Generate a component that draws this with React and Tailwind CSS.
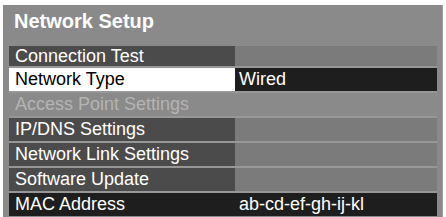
import React from 'react';

const rows = [
  { label: 'Connection Test', value: '', kind: 'normal', h: 'h-[20px]' },
  { label: 'Network Type', value: 'Wired', kind: 'selected', h: 'h-[23px]' },
  { label: 'Access Point Settings', value: '', kind: 'disabled', h: 'h-[23px]' },
  { label: 'IP/DNS Settings', value: '', kind: 'normal', h: 'h-[23px]' },
  { label: 'Network Link Settings', value: '', kind: 'normal', h: 'h-[23px]' },
  { label: 'Software Update', value: '', kind: 'normal', h: 'h-[23px]' },
  { label: 'MAC Address', value: 'ab-cd-ef-gh-ij-kl', kind: 'info', h: 'h-[23px]' },
];

function Row({ row }) {
  let left = 'bg-[#4b4b4b] text-white';
  let right = 'bg-[#7b7b7b] text-white';
  if (row.kind === 'selected') {
    left = 'bg-white text-black';
    right = 'bg-[#1e1e1e] text-white';
  } else if (row.kind === 'disabled') {
    left = 'bg-[#8a8a8a] text-[#b4b4b4]';
    right = 'bg-[#8a8a8a]';
  } else if (row.kind === 'info') {
    left = 'bg-[#1e1e1e] text-white';
    right = 'bg-[#1e1e1e] text-white';
  }

  return (
    <div className={`flex ${row.h}`}>
      <div className={`w-[226px] flex items-center pl-[6px] ${left}`}>{row.label}</div>
      <div className={`w-[202px] flex items-center pl-[4px] ${right}`}>{row.value}</div>
    </div>
  );
}

export default function App() {
  return (
    <div className="w-[446px] h-[217px] bg-white overflow-hidden" style={{ fontFamily: '"Liberation Sans", Arial, sans-serif' }}>
      <div className="ml-[3px] mt-[5px] w-[440px] h-[220px] bg-[#8a8a8a] border-r border-[#a0a0a0] pt-[5px] pl-[6px]">
        <div className="text-[20px] leading-[23px] font-bold text-white pl-[5px]">Network Setup</div>
        <div className="mt-[13px] w-[428px] flex flex-col gap-[2px] bg-[#979797] text-[18px] leading-[21px]">
          {rows.map((row) => (
            <Row key={row.label} row={row} />
          ))}
        </div>
      </div>
    </div>
  );
}
